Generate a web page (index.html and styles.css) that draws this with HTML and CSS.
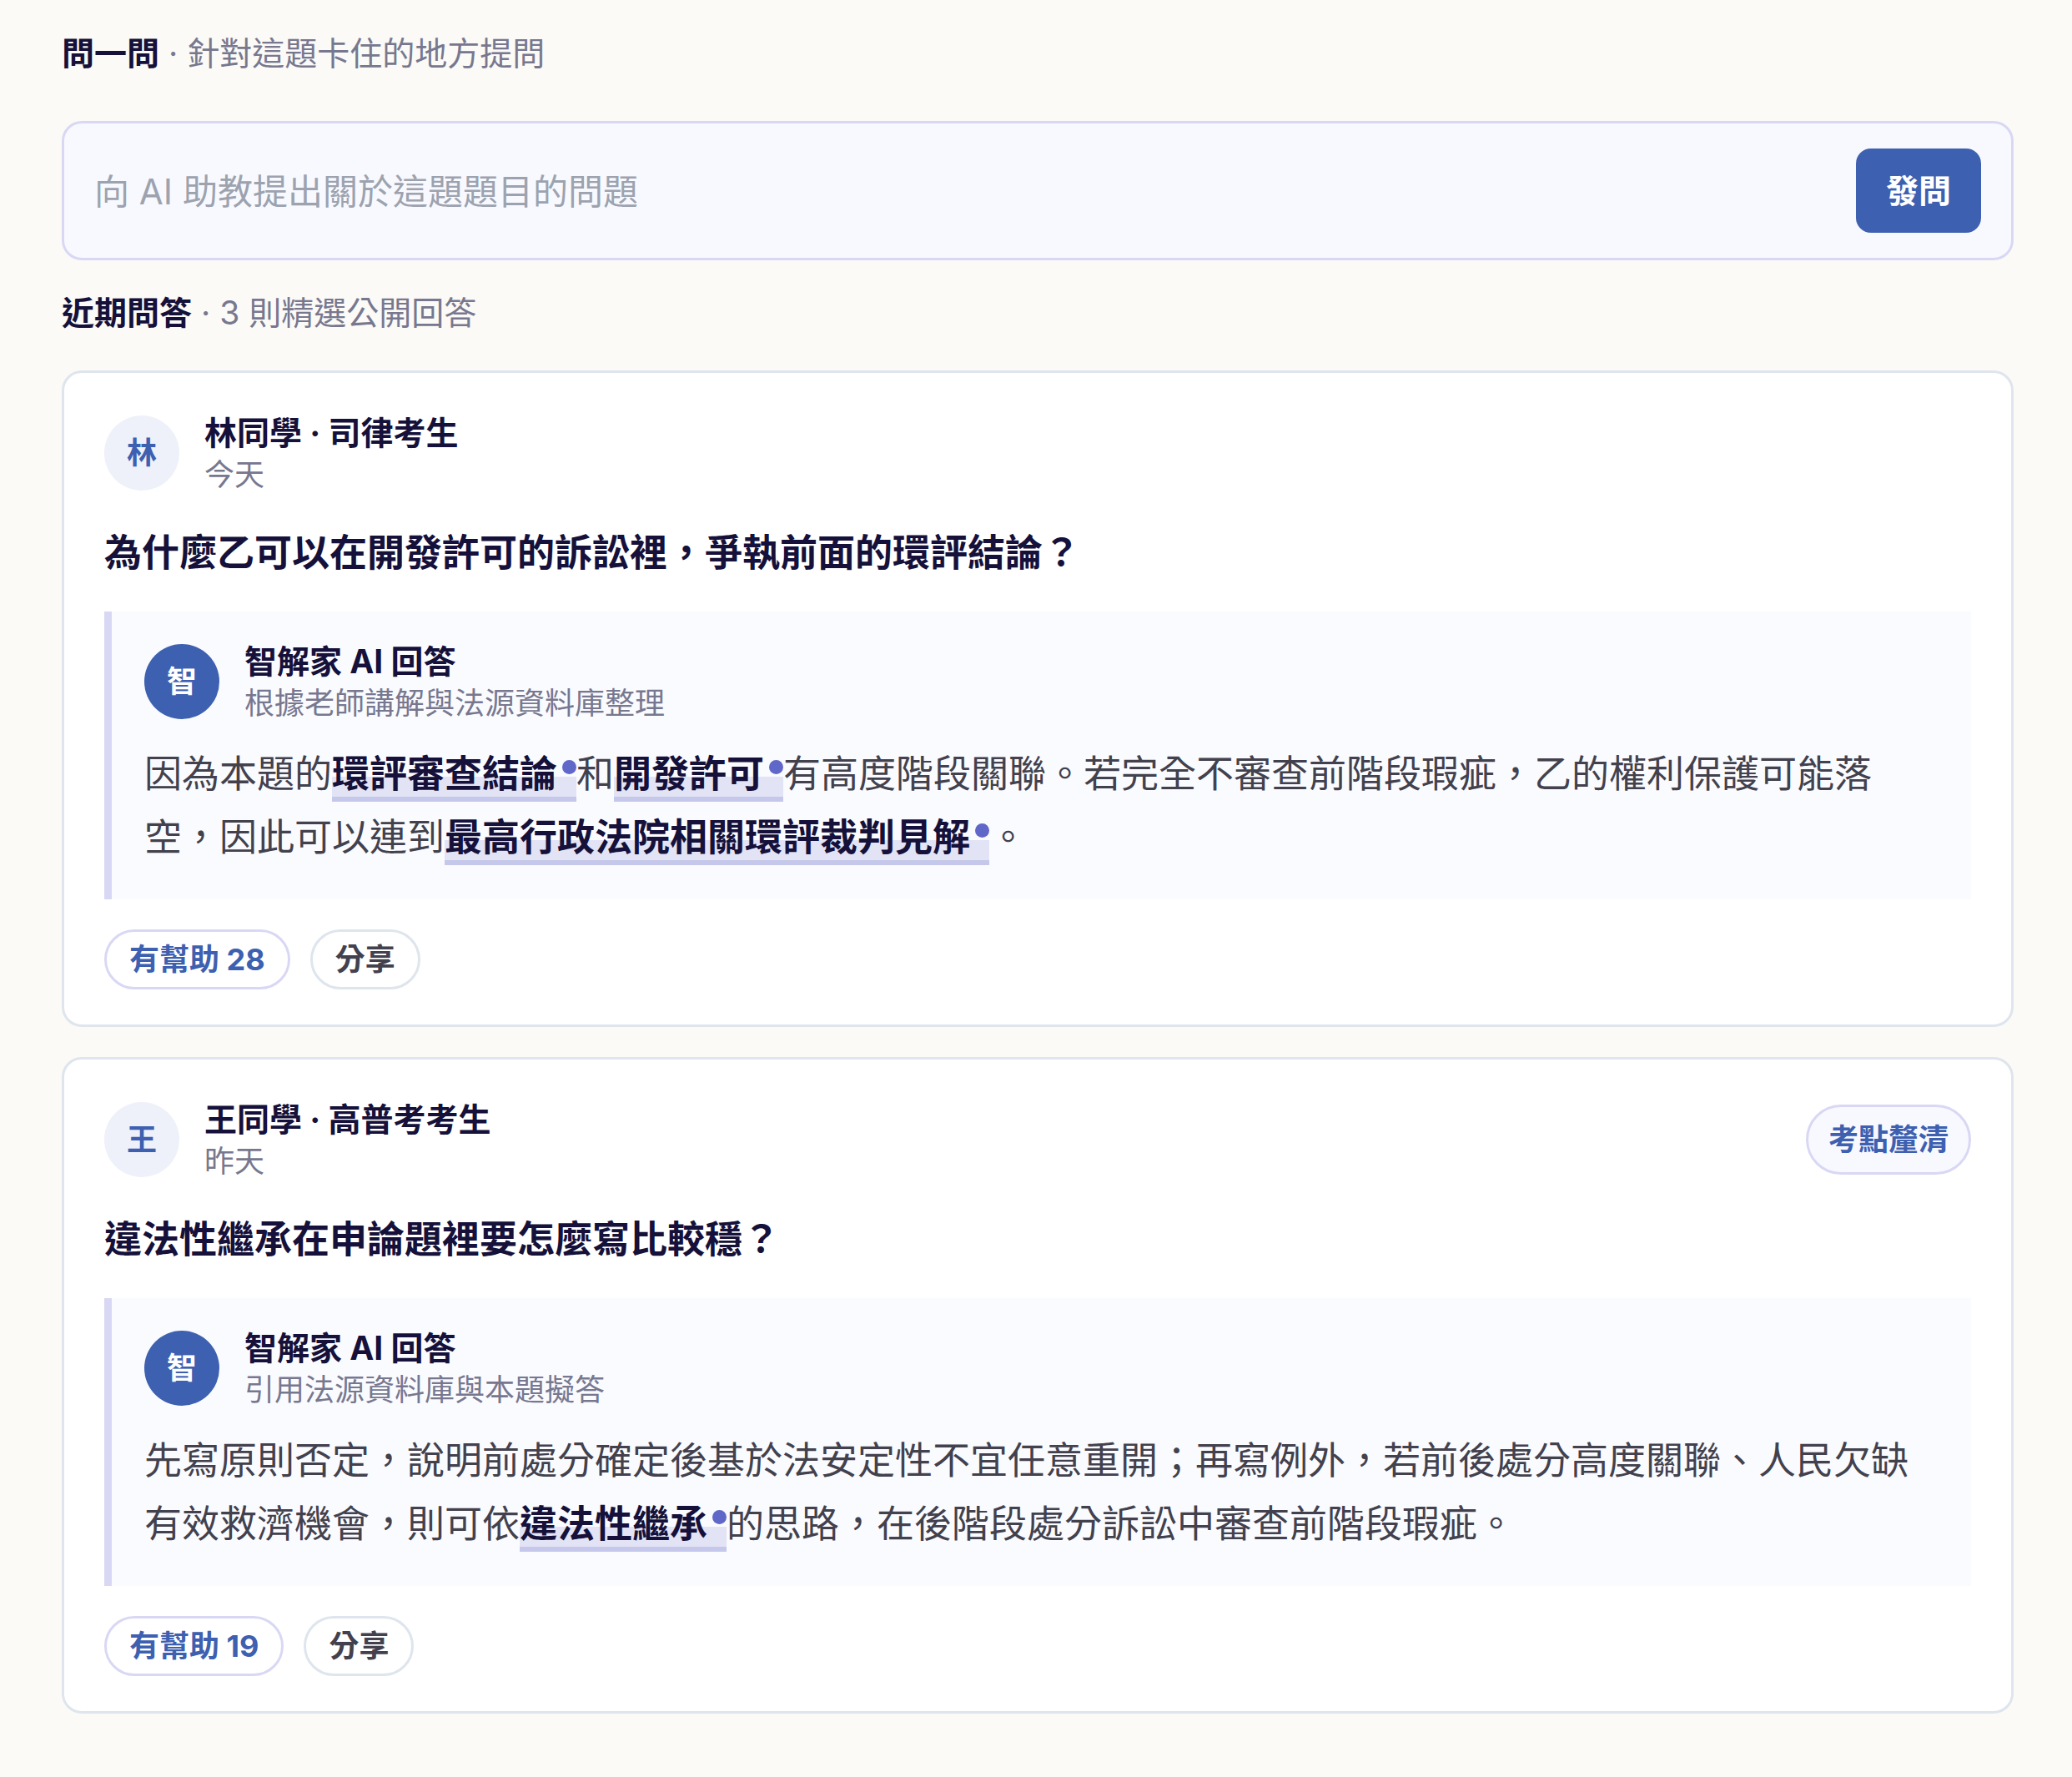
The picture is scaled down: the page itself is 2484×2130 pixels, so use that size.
FILE: index.html
```html
<!DOCTYPE html>
<html lang="zh-Hant">
<head>
  <meta charset="UTF-8">
  <meta name="viewport" content="width=device-width, initial-scale=1">
  <title>問一問</title>
  <link rel="stylesheet" href="styles.css">
</head>
<body>
  <main class="page">
    <h2 class="section-title">問一問<label for="question" class="muted"> · 針對這題卡住的地方提問</label></h2>

    <form class="ask-box">
      <input type="text" id="question" placeholder="向 AI 助教提出關於這題題目的問題">
      <button type="button" class="ask-btn">發問</button>
    </form>

    <h2 class="section-title">近期問答<span class="muted"> · 3 則精選公開回答</span></h2>

    <div class="qa-list">
      <article class="card">
        <header class="person">
          <div class="avatar">林</div>
          <div class="who">
            <div class="name">林同學 · 司律考生</div>
            <div class="meta">今天</div>
          </div>
        </header>
        <h3 class="question">為什麼乙可以在開發許可的訴訟裡，爭執前面的環評結論？</h3>
        <section class="answer">
          <div class="person">
            <div class="avatar ai">智</div>
            <div class="who">
              <div class="name">智解家 AI 回答</div>
              <div class="meta">根據老師講解與法源資料庫整理</div>
            </div>
          </div>
          <p>因為本題的<a href="#" class="term">環評審查結論</a>和<a href="#" class="term">開發許可</a>有高度階段關聯。若完全不審查前階段瑕疵，乙的權利保護可能落空，因此可以連到<a href="#" class="term">最高行政法院相關環評裁判見解</a>。</p>
        </section>
        <footer class="actions">
          <button type="button" class="pill helpful">有幫助 28</button>
          <button type="button" class="pill">分享</button>
        </footer>
      </article>

      <article class="card">
        <header class="person">
          <div class="avatar">王</div>
          <div class="who">
            <div class="name">王同學 · 高普考考生</div>
            <div class="meta">昨天</div>
          </div>
          <span class="badge">考點釐清</span>
        </header>
        <h3 class="question">違法性繼承在申論題裡要怎麼寫比較穩？</h3>
        <section class="answer">
          <div class="person">
            <div class="avatar ai">智</div>
            <div class="who">
              <div class="name">智解家 AI 回答</div>
              <div class="meta">引用法源資料庫與本題擬答</div>
            </div>
          </div>
          <p>先寫原則否定，說明前處分確定後基於法安定性不宜任意重開；再寫例外，若前後處分高度關聯、人民欠缺有效救濟機會，則可依<a href="#" class="term">違法性繼承</a>的思路，在後階段處分訴訟中審查前階段瑕疵。</p>
        </section>
        <footer class="actions">
          <button type="button" class="pill helpful">有幫助 19</button>
          <button type="button" class="pill">分享</button>
        </footer>
      </article>
    </div>
  </main>
</body>
</html>
```
FILE: styles.css
```css
:root {
  --ink: #15113a;
  --text: #42414d;
  --muted: #77788f;
  --blue: #3d60b0;
  --lavender: #d9d8f4;
  --line: #dee5ed;
}

* {
  box-sizing: border-box;
}

body {
  margin: 0;
  background: #fbfaf6;
  color: var(--text);
  font-family: Inter, "Noto Sans CJK TC", sans-serif;
  font-size: 45px;
}

h2, h3, p {
  margin: 0;
}

button, input {
  font-family: inherit;
}

.page {
  padding: 34px 70px 72px 74px;
}

.section-title {
  font-size: 39px;
  line-height: 60px;
  font-weight: 700;
  color: var(--ink);
}

.muted {
  font-weight: 400;
  color: var(--muted);
}

/* ask form */
.ask-box {
  display: flex;
  align-items: center;
  gap: 30px;
  margin: 51px 0 33px;
  padding: 30px 36px;
  background: #f8f9ff;
  border: 3px solid var(--lavender);
  border-radius: 24px;
}

.ask-box input {
  flex: 1;
  min-width: 0;
  padding: 2px 0 0;
  border: 0;
  outline: 0;
  background: transparent;
  color: var(--ink);
  font-size: 42px;
  line-height: 60px;
}

.ask-box input::placeholder {
  color: #9ca3af;
}

.ask-btn {
  padding: 21px 36px;
  border: 0;
  border-radius: 18px;
  background: var(--blue);
  color: #fff;
  font-size: 39px;
  line-height: 59px;
  font-weight: 600;
}

/* cards */
.qa-list {
  display: flex;
  flex-direction: column;
  gap: 36px;
  margin-top: 39px;
}

.card {
  padding: 44px 48px 42px;
  background: #fff;
  border: 3px solid var(--line);
  border-radius: 24px;
}

.person {
  display: flex;
  align-items: center;
  gap: 30px;
}

.avatar {
  flex: none;
  width: 90px;
  height: 90px;
  border-radius: 50%;
  background: #eef1f9;
  color: var(--blue);
  font-size: 36px;
  line-height: 90px;
  font-weight: 600;
  text-align: center;
}

.avatar.ai {
  background: var(--blue);
  color: #fff;
}

.who {
  flex: 1;
  padding-top: 2px;
  line-height: 51px;
}

.name {
  color: var(--ink);
  font-size: 39px;
  font-weight: 700;
}

.meta {
  color: var(--muted);
  font-size: 36px;
}

.badge {
  padding: 15px 24px;
  background: #f8f9ff;
  border: 3px solid var(--lavender);
  border-radius: 42px;
  color: var(--blue);
  font-size: 36px;
  line-height: 48px;
  font-weight: 600;
}

.question {
  margin: 38px 0 40px;
  color: var(--ink);
  font-size: 45px;
  line-height: 60px;
  font-weight: 600;
}

.answer {
  padding: 32px 39px 36px;
  background: #fafbff;
  border-left: 9px solid var(--lavender);
}

.answer p {
  margin-top: 21px;
  line-height: 76px;
}

/* highlighted term with a source dot */
.term {
  color: var(--ink);
  font-weight: 700;
  text-decoration: none;
  background: linear-gradient(transparent 56%, #e2e3f5 56%);
  border-bottom: 6px solid #c5c8ea;
}

.term::after {
  content: "";
  display: inline-block;
  width: 17px;
  height: 17px;
  margin-left: 6px;
  border-radius: 50%;
  background: #5f67c8;
  vertical-align: super;
}

.actions {
  display: flex;
  gap: 24px;
  margin-top: 36px;
}

.pill {
  padding: 9px 27px;
  background: #fff;
  border: 3px solid var(--line);
  border-radius: 36px;
  color: var(--text);
  font-size: 36px;
  line-height: 48px;
  font-weight: 600;
}

.pill.helpful {
  border-color: var(--lavender);
  color: var(--blue);
  font-weight: 700;
}
```
